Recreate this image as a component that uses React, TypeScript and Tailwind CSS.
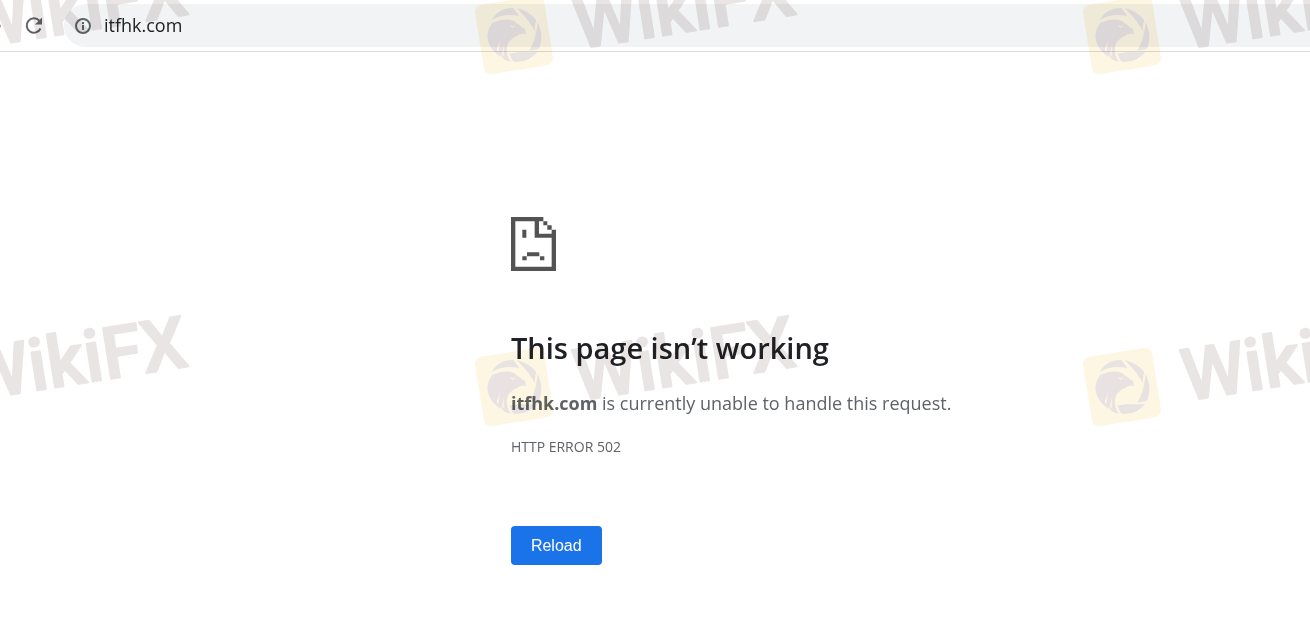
import { MouseEvent } from 'react';

const tiles = [
  { x: -94, y: 35 },
  { x: 514, y: 35 },
  { x: 1122, y: 35 },
  { x: -94, y: 387 },
  { x: 514, y: 387 },
  { x: 1122, y: 387 }
];

const EagleBadge = () => {
  return (
    <g>
      <rect x="-35" y="-35" width="70" height="70" rx="7" fill="#fdf6e2" transform="rotate(-9)" />
      <g fill="#e8e2e2" transform="scale(0.3333) translate(-126 -132)">
        <path d="M60 86C74 62 98 50 124 51L142 76C112 68 86 72 60 86Z" />
        <path d="M134 51C160 57 182 72 192 87L187 120C180 100 158 74 134 51Z" />
        <path d="M197 94C212 124 211 153 200 174L172 179C184 160 192 135 197 94Z" />
        <path d="M196 182C178 205 150 215 124 212L112 188C140 180 165 186 196 182Z" />
        <path d="M60 96C82 86 110 80 130 92C138 102 154 108 160 116L161 130C152 126 142 128 136 134C122 140 108 150 105 168C103 185 108 200 117 213C106 210 98 207 92 202L86 190L85 197C68 186 54 168 48 150L46 132L50 114Z" />
        <path d="M114 103L132 107L121 110Z" fill="#fdf6e2" />
        <path d="M74 176L84 150L80 184ZM90 190L96 162L95 198Z" fill="#fdf6e2" />
      </g>
    </g>
  );
};

const Watermark = () => {
  return (
    <svg className="pointer-events-none absolute inset-0 h-full w-full mix-blend-multiply" aria-hidden="true">
      {tiles.map((tile) => (
        <g key={`${tile.x}-${tile.y}`} transform={`translate(${tile.x} ${tile.y})`}>
          <EagleBadge />
          <g transform="translate(64 14) rotate(-9)">
            <text
              className="font-['Roboto','Open_Sans',sans-serif] text-[72px] font-medium"
              fill="#e9e5e4"
              stroke="#e9e5e4"
              strokeWidth="2"
              strokeLinejoin="round"
            >
              WikiFX
            </text>
          </g>
        </g>
      ))}
    </svg>
  );
};

const AddressBar = () => {
  return (
    <header className="flex h-[52px] items-center border-b border-[#dadce0]">
      <svg width="2" height="6" viewBox="0 0 2 6" fill="#8a8d91">
        <path d="M0 1L1 3L0 5Z" />
      </svg>
      <button type="button" aria-label="Reload this page" className="ml-[22px] text-[#5f6368]">
        <svg width="20" height="20" viewBox="0 0 20 20" fill="none">
          <path d="M16.5 12.5A7.2 7.2 0 1 1 15.3 4.7" stroke="currentColor" strokeWidth="2" />
          <path d="M18 1.5V8.5H11Z" fill="currentColor" />
        </svg>
      </button>
      <div className="ml-5 flex h-[43px] flex-1 items-center rounded-l-full bg-[#f1f3f4] pl-[10px]">
        <svg width="18" height="18" viewBox="0 0 18 18" fill="none" className="text-[#5f6368]">
          <circle cx="9" cy="9" r="7" stroke="currentColor" strokeWidth="2" />
          <path d="M9 8V13M9 5V7" stroke="currentColor" strokeWidth="2" />
        </svg>
        <input
          aria-label="Address"
          defaultValue="itfhk.com"
          className="ml-3 flex-1 bg-transparent text-[18px] text-[#202124] outline-none"
        />
      </div>
    </header>
  );
};

const SadPageIcon = () => {
  return (
    <svg className="block" width="45" height="54" viewBox="0 0 135 162" fill="#535353">
      <path d="M0 0H97V13H84V50H122V38H135V162H0ZM13 13V149H122V62H71V13Z" fillRule="evenodd" />
      <path d="M97 13H109V25H97ZM109 25H122V38H109Z" />
      <path d="M34 38H46V62H34ZM48 106H85V118H48ZM34 118H47V130H34ZM87 118H100V130H87Z" />
    </svg>
  );
};

const App = () => {
  const onClickReload = (e: MouseEvent<HTMLButtonElement>) => {
    e.preventDefault();
    window.location.reload();
  };

  return (
    <div className="relative min-h-screen overflow-hidden bg-white font-['Open_Sans','Noto_Sans',sans-serif]">
      <AddressBar />
      <main className="ml-[39%] pt-[165px] text-[#5f6368]">
        <SadPageIcon />
        <h1 className="mt-14 text-[29px] leading-[42px] font-semibold text-[#202124]">This page isn’t working</h1>
        <p className="mt-5 text-[18px] leading-7">
          <strong>itfhk.com</strong> is currently unable to handle this request.
        </p>
        <p className="mt-5 text-[14px] leading-5">HTTP ERROR 502</p>
        <button
          type="button"
          onClick={onClickReload}
          className="mt-[69px] h-[39px] rounded bg-[#1a73e8] px-5 font-['Liberation_Sans',sans-serif] text-[16px] text-white"
        >
          Reload
        </button>
      </main>
      <Watermark />
    </div>
  );
};

export default App;
